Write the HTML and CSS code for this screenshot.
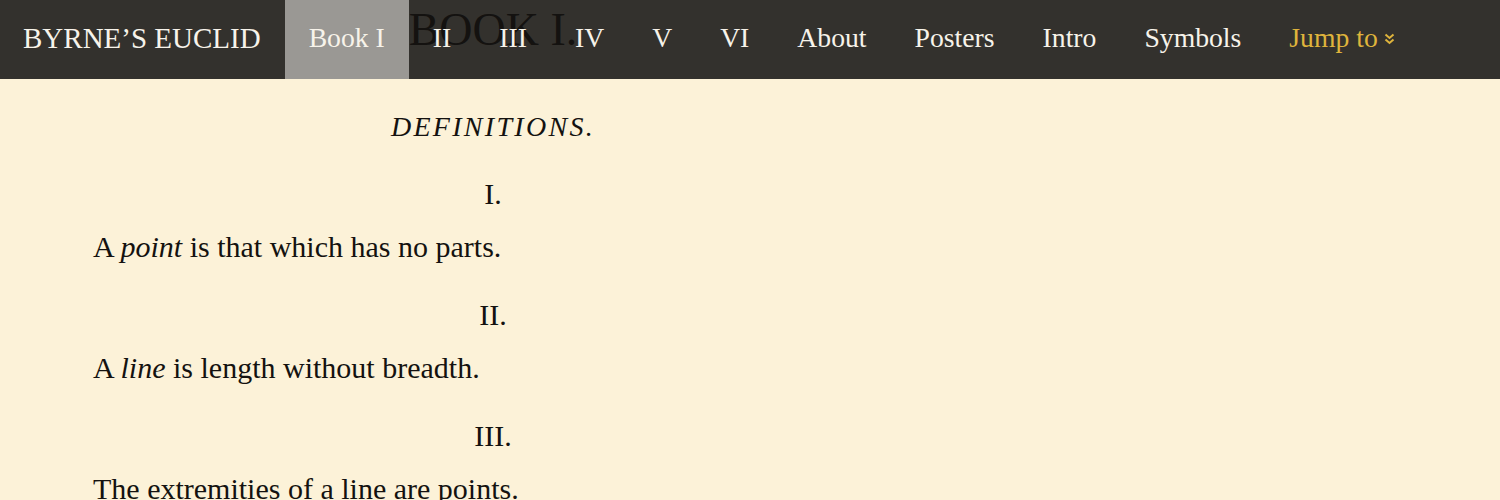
FILE: index.html
```html
<!DOCTYPE html>
<html lang="en">
<head>
    <meta charset="UTF-8">
    <meta name="viewport" content="width=device-width, initial-scale=1.0">
    <title>Byrne's Euclid — Book I</title>
    <link rel="stylesheet" href="styles.css">
</head>
<body>
    <header class="topbar">
        <a class="nav-link brand" href="#">BYRNE’S EUCLID</a>
        <a class="nav-link active" href="#">Book I</a>
        <a class="nav-link" href="#">II</a>
        <a class="nav-link" href="#">III</a>
        <a class="nav-link" href="#">IV</a>
        <a class="nav-link" href="#">V</a>
        <a class="nav-link" href="#">VI</a>
        <a class="nav-link" href="#">About</a>
        <a class="nav-link" href="#">Posters</a>
        <a class="nav-link" href="#">Intro</a>
        <a class="nav-link" href="#">Symbols</a>
        <a class="nav-link jump" href="#">Jump to
            <svg class="chevrons" width="11" height="12" viewBox="0 0 11 12">
                <polyline points="1.5,1.5 5.5,5 9.5,1.5" />
                <polyline points="1.5,6.5 5.5,10 9.5,6.5" />
            </svg>
        </a>
    </header>

    <main class="book">
        <h1 class="book-title">BOOK I.</h1>
        <h2 class="section-title">DEFINITIONS.</h2>

        <section class="def">
            <div class="def-num">I.</div>
            <p class="def-text">A <em>point</em> is that which has no parts.</p>
        </section>
        <section class="def">
            <div class="def-num">II.</div>
            <p class="def-text">A <em>line</em> is length without breadth.</p>
        </section>
        <section class="def">
            <div class="def-num">III.</div>
            <p class="def-text">The extremities of a line are points.</p>
        </section>
    </main>
</body>
</html>
```

FILE: styles.css
```css
body {
    margin: 0;
    background: #fcf2d8;
    color: #141210;
    font-family: "Liberation Serif", "Times New Roman", serif;
}

/* top navigation */
.topbar {
    display: flex;
    height: 79px;
    background: #33312d;
}
.nav-link {
    position: relative; /* links sit above the page title */
    display: flex;
    align-items: center;
    padding: 0 24px 3px;
    height: 79px;
    box-sizing: border-box;
    font-size: 27.7px;
    color: #f7f3ea;
    text-decoration: none;
}
.nav-link.brand {
    padding-left: 23px;
    font-size: 29px;
}
.nav-link.active {
    background: #9a9894;
}
.nav-link.jump {
    color: #dfb43c;
}
.chevrons {
    margin-left: 6px;
    margin-top: 2px;
    fill: none;
    stroke: #dfb43c;
    stroke-width: 2;
}

/* book text */
.book {
    width: 800px;
    margin: -79px 0 0 93px;
}
.book-title {
    margin: 2px 0 0;
    font-size: 46px;
    line-height: 56px;
    font-weight: normal;
    text-align: center;
}
.section-title {
    margin: 48px 0 25px;
    font-size: 28px;
    line-height: 42px;
    font-weight: normal;
    font-style: italic;
    letter-spacing: 2.3px;
    text-align: center;
}
.def {
    margin-bottom: 26px;
}
.def-num {
    margin-bottom: 11px;
    font-size: 30px;
    line-height: 42px;
    text-align: center;
}
.def-text {
    margin: 0;
    font-size: 30px;
    line-height: 42px;
}
```
